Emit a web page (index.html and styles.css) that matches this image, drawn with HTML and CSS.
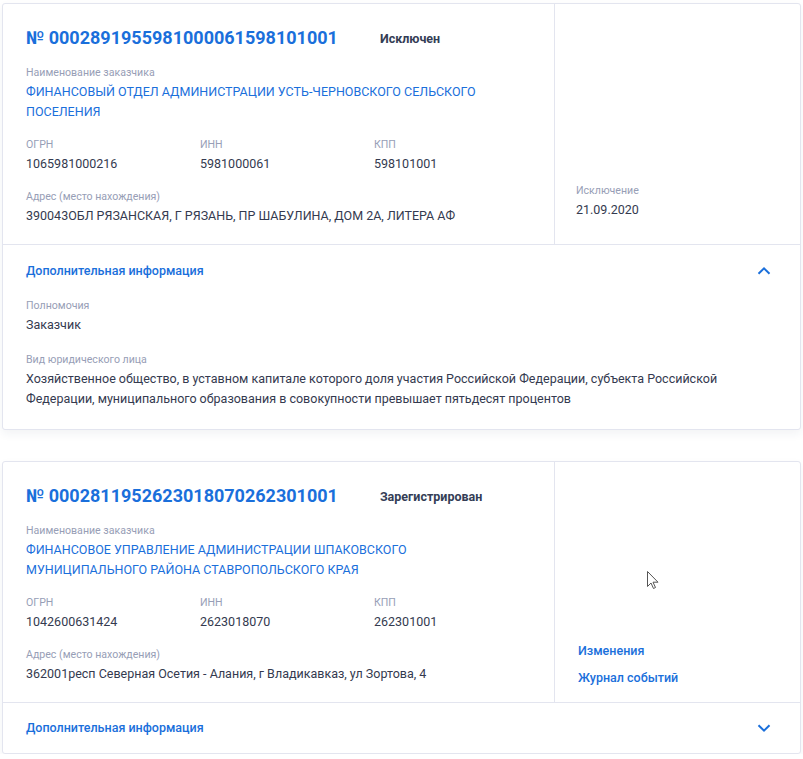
FILE: index.html
```html
<!DOCTYPE html>
<html lang="ru">
<head>
<meta charset="utf-8">
<title>Реестр заказчиков</title>
<link rel="stylesheet" href="styles.css">
</head>
<body>
<div class="list">
  <section class="card">
    <div class="card-main">
      <div class="card-left">
        <div class="head">
          <h2 class="num">№ 0002891955981000061598101001</h2>
          <span class="status">Исключен</span>
        </div>
        <div class="field">
          <div class="label">Наименование заказчика</div>
          <a class="org" href="#">ФИНАНСОВЫЙ ОТДЕЛ АДМИНИСТРАЦИИ УСТЬ-ЧЕРНОВСКОГО СЕЛЬСКОГО ПОСЕЛЕНИЯ</a>
        </div>
        <div class="grid3">
          <div class="field"><div class="label">ОГРН</div><div class="value">1065981000216</div></div>
          <div class="field"><div class="label">ИНН</div><div class="value">5981000061</div></div>
          <div class="field"><div class="label">КПП</div><div class="value">598101001</div></div>
        </div>
        <div class="field">
          <div class="label">Адрес (место нахождения)</div>
          <div class="value">390043ОБЛ РЯЗАНСКАЯ, Г РЯЗАНЬ, ПР ШАБУЛИНА, ДОМ 2А, ЛИТЕРА АФ</div>
        </div>
      </div>
      <div class="card-right dates">
        <div class="field">
          <div class="label">Исключение</div>
          <div class="value">21.09.2020</div>
        </div>
      </div>
    </div>
    <div class="extra">
      <div class="extra-head open">
        <span class="extra-title">Дополнительная информация</span>
        <svg class="chev" width="24" height="24" viewBox="0 0 24 24"><path d="M6.5 14.8l5.5-5.5 5.5 5.5" fill="none" stroke="#1a6fdb" stroke-width="2"/></svg>
      </div>
      <div class="extra-body">
        <div class="field">
          <div class="label">Полномочия</div>
          <div class="value">Заказчик</div>
        </div>
        <div class="field">
          <div class="label">Вид юридического лица</div>
          <div class="value">Хозяйственное общество, в уставном капитале которого доля участия Российской Федерации, субъекта Российской Федерации, муниципального образования в совокупности превышает пятьдесят процентов</div>
        </div>
      </div>
    </div>
  </section>

  <section class="card">
    <div class="card-main">
      <div class="card-left">
        <div class="head">
          <h2 class="num">№ 0002811952623018070262301001</h2>
          <span class="status">Зарегистрирован</span>
        </div>
        <div class="field">
          <div class="label">Наименование заказчика</div>
          <a class="org" href="#">ФИНАНСОВОЕ УПРАВЛЕНИЕ АДМИНИСТРАЦИИ ШПАКОВСКОГО МУНИЦИПАЛЬНОГО РАЙОНА СТАВРОПОЛЬСКОГО КРАЯ</a>
        </div>
        <div class="grid3">
          <div class="field"><div class="label">ОГРН</div><div class="value">1042600631424</div></div>
          <div class="field"><div class="label">ИНН</div><div class="value">2623018070</div></div>
          <div class="field"><div class="label">КПП</div><div class="value">262301001</div></div>
        </div>
        <div class="field">
          <div class="label">Адрес (место нахождения)</div>
          <div class="value">362001респ Северная Осетия - Алания, г Владикавказ, ул Зортова, 4</div>
        </div>
      </div>
      <div class="card-right links">
        <a class="link" href="#">Изменения</a>
        <a class="link" href="#">Журнал событий</a>
      </div>
    </div>
    <div class="extra">
      <div class="extra-head closed">
        <span class="extra-title">Дополнительная информация</span>
        <svg class="chev" width="24" height="24" viewBox="0 0 24 24"><path d="M6.5 9.2l5.5 5.5 5.5-5.5" fill="none" stroke="#1a6fdb" stroke-width="2"/></svg>
      </div>
    </div>
    <svg class="cursor" width="14" height="20" viewBox="0 0 14 20"><path d="M1.5 1.5v15l3.5-3.5 2.5 5.5 2-1-2.5-5.3h5z" fill="#fff" stroke="#555" stroke-width="1" stroke-linejoin="round"/></svg>
  </section>
</div>
</body>
</html>
```

FILE: styles.css
```css
* { box-sizing: border-box; }
html, body { margin: 0; padding: 0; background: #fff; }
body {
  font-family: Roboto, "Noto Sans", Arial, sans-serif;
  color: #334059;
  font-size: 12.5px;
}
.list {
  padding: 3px 2px 0 2px;
  display: flex;
  flex-direction: column;
  gap: 31px;
}
.card {
  position: relative;
  border: 1px solid #e3e5ef;
  border-radius: 3px;
  background: #fff;
  box-shadow: 0 4px 10px rgba(40, 50, 90, 0.06);
}
.card-main {
  display: grid;
  grid-template-columns: 1fr 246px;
  border-bottom: 1px solid #e3e5ef;
}
.card-left {
  padding: 22px 23px 18px 23px;
  display: flex;
  flex-direction: column;
  gap: 15px;
}
.head {
  display: flex;
  align-items: center;
  gap: 42px;
}
.num {
  margin: 0;
  font-size: 18px;
  line-height: 24px;
  font-weight: 700;
  color: #1a6fdb;
}
.status {
  font-size: 12.5px;
  font-weight: 700;
  color: #343d55;
}
.label {
  font-size: 10.6px;
  line-height: 16px;
  color: #979eb6;
  margin-bottom: 1px;
}
.value {
  font-size: 12.5px;
  line-height: 20px;
  color: #343a4f;
}
.org {
  display: block;
  font-size: 12.5px;
  line-height: 20px;
  color: #1a6fdb;
  text-decoration: none;
  max-width: 470px;
}
.grid3 {
  display: grid;
  grid-template-columns: 174px 174px 1fr;
}
.card-right {
  border-left: 1px solid #e3e5ef;
  padding: 22px 21px 24px 21px;
  display: flex;
  flex-direction: column;
  justify-content: flex-end;
}
.links { gap: 7px; padding: 22px 21px 14px 23px; }
.link {
  font-size: 12.5px;
  line-height: 20px;
  font-weight: 500;
  color: #1a6fdb;
  text-decoration: none;
}
.extra-head {
  display: flex;
  align-items: center;
  justify-content: space-between;
  padding: 0 24px 0 23px;
}
.extra-head.open { padding-top: 16px; height: 36px; }
.extra-head.closed { height: 50px; }
.extra-title {
  font-size: 12.5px;
  line-height: 20px;
  font-weight: 500;
  color: #1a6fdb;
}
.extra-body {
  padding: 17px 23px 20px 23px;
  display: flex;
  flex-direction: column;
  gap: 17px;
}
.extra-body .value { max-width: 720px; }
.cursor {
  position: absolute;
  left: 643px;
  top: 108px;
}
```
